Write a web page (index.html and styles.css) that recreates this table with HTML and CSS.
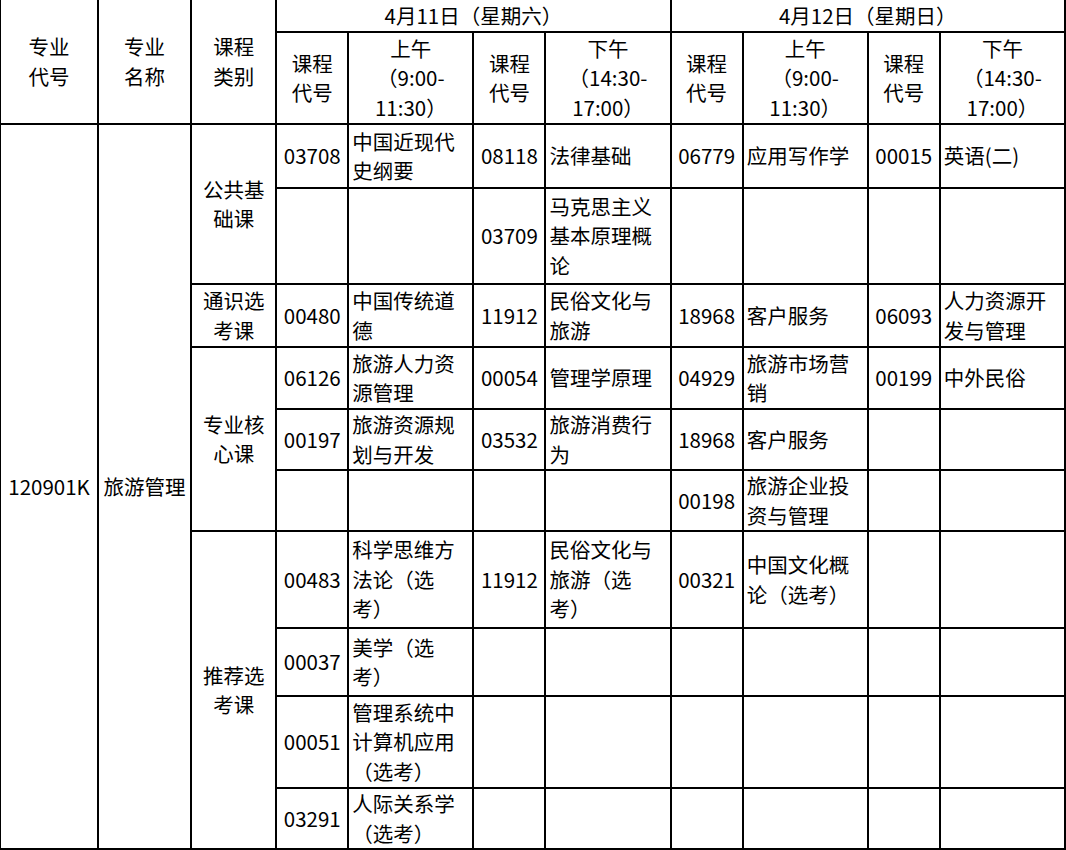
FILE: index.html
```html
<!DOCTYPE html>
<html lang="zh-CN">
<head>
<meta charset="utf-8">
<title>考试安排</title>
<link rel="stylesheet" href="styles.css">
</head>
<body>
<div class="frame">
<table class="sched">
  <colgroup>
    <col class="c1"><col class="c2"><col class="c3">
    <col class="code"><col class="name"><col class="code"><col class="name">
    <col class="code"><col class="name"><col class="code"><col class="name">
  </colgroup>
  <thead>
    <tr class="h1">
      <th rowspan="2">专业<br>代号</th>
      <th rowspan="2">专业<br>名称</th>
      <th rowspan="2">课程<br>类别</th>
      <th colspan="4">4月11日（星期六）</th>
      <th colspan="4">4月12日（星期日）</th>
    </tr>
    <tr class="h2">
      <th>课程<br>代号</th><th>上午<br>（9:00-<br>11:30）</th>
      <th>课程<br>代号</th><th>下午<br>（14:30-<br>17:00）</th>
      <th>课程<br>代号</th><th>上午<br>（9:00-<br>11:30）</th>
      <th>课程<br>代号</th><th>下午<br>（14:30-<br>17:00）</th>
    </tr>
  </thead>
  <tbody>
    <tr class="ra">
      <td rowspan="10" class="ctr">120901K</td>
      <td rowspan="10" class="ctr">旅游管理</td>
      <td rowspan="2" class="ctr">公共基<br>础课</td>
      <td class="cd">03708</td><td class="nm">中国近现代<br>史纲要</td>
      <td class="cd">08118</td><td class="nm">法律基础</td>
      <td class="cd">06779</td><td class="nm">应用写作学</td>
      <td class="cd">00015</td><td class="nm">英语(二)</td>
    </tr>
    <tr class="rb">
      <td class="cd"></td><td class="nm"></td>
      <td class="cd">03709</td><td class="nm">马克思主义<br>基本原理概<br>论</td>
      <td class="cd"></td><td class="nm"></td>
      <td class="cd"></td><td class="nm"></td>
    </tr>
    <tr class="rc">
      <td class="ctr">通识选<br>考课</td>
      <td class="cd">00480</td><td class="nm">中国传统道<br>德</td>
      <td class="cd">11912</td><td class="nm">民俗文化与<br>旅游</td>
      <td class="cd">18968</td><td class="nm">客户服务</td>
      <td class="cd">06093</td><td class="nm">人力资源开<br>发与管理</td>
    </tr>
    <tr class="rd">
      <td rowspan="3" class="ctr">专业核<br>心课</td>
      <td class="cd">06126</td><td class="nm">旅游人力资<br>源管理</td>
      <td class="cd">00054</td><td class="nm">管理学原理</td>
      <td class="cd">04929</td><td class="nm">旅游市场营<br>销</td>
      <td class="cd">00199</td><td class="nm">中外民俗</td>
    </tr>
    <tr class="re">
      <td class="cd">00197</td><td class="nm">旅游资源规<br>划与开发</td>
      <td class="cd">03532</td><td class="nm">旅游消费行<br>为</td>
      <td class="cd">18968</td><td class="nm">客户服务</td>
      <td class="cd"></td><td class="nm"></td>
    </tr>
    <tr class="rf">
      <td class="cd"></td><td class="nm"></td>
      <td class="cd"></td><td class="nm"></td>
      <td class="cd">00198</td><td class="nm">旅游企业投<br>资与管理</td>
      <td class="cd"></td><td class="nm"></td>
    </tr>
    <tr class="rg">
      <td rowspan="4" class="ctr">推荐选<br>考课</td>
      <td class="cd">00483</td><td class="nm">科学思维方<br>法论（选<br>考）</td>
      <td class="cd">11912</td><td class="nm">民俗文化与<br>旅游（选<br>考）</td>
      <td class="cd">00321</td><td class="nm">中国文化概<br>论（选考）</td>
      <td class="cd"></td><td class="nm"></td>
    </tr>
    <tr class="rh">
      <td class="cd">00037</td><td class="nm">美学（选<br>考）</td>
      <td class="cd"></td><td class="nm"></td>
      <td class="cd"></td><td class="nm"></td>
      <td class="cd"></td><td class="nm"></td>
    </tr>
    <tr class="ri">
      <td class="cd">00051</td><td class="nm">管理系统中<br>计算机应用<br>（选考）</td>
      <td class="cd"></td><td class="nm"></td>
      <td class="cd"></td><td class="nm"></td>
      <td class="cd"></td><td class="nm"></td>
    </tr>
    <tr class="rj">
      <td class="cd">03291</td><td class="nm">人际关系学<br>（选考）</td>
      <td class="cd"></td><td class="nm"></td>
      <td class="cd"></td><td class="nm"></td>
      <td class="cd"></td><td class="nm"></td>
    </tr>
  </tbody>
</table>
</div>
</body>
</html>
```

FILE: styles.css
```css
html, body {
  margin: 0;
  padding: 0;
  background: #ffffff;
}

.frame {
  width: 1066px;
  height: 850px;
  overflow: hidden;
}

.sched {
  border-collapse: collapse;
  table-layout: fixed;
  width: 1067px;
  margin: -2px 0 0 -1px;
  font-family: "Noto Sans CJK SC", "Microsoft YaHei", sans-serif;
  font-size: 20.5px;
  line-height: 29.5px;
  color: #000000;
}

.sched th,
.sched td {
  border: 2px solid #000000;
  padding: 0 3px;
  vertical-align: middle;
  overflow: hidden;
  white-space: nowrap;
}

.sched th {
  font-weight: normal;
  text-align: center;
}

.c1 { width: 98px; }
.c2 { width: 93px; }
.c3 { width: 85px; }
.code { width: 72px; }
.name { width: 125px; }

.ctr { text-align: center; }
.cd { text-align: center; padding: 0 1px; }
.nm { text-align: left; padding: 0 2px 0 4px; }

.h1 { height: 33px; }
.h2 { height: 92px; }
.ra { height: 64px; }
.rb { height: 96px; }
.rc { height: 63px; }
.rd { height: 62px; }
.re { height: 61px; }
.rf { height: 61px; }
.rg { height: 97px; }
.rh { height: 68px; }
.ri { height: 92px; }
.rj { height: 59px; }
```
